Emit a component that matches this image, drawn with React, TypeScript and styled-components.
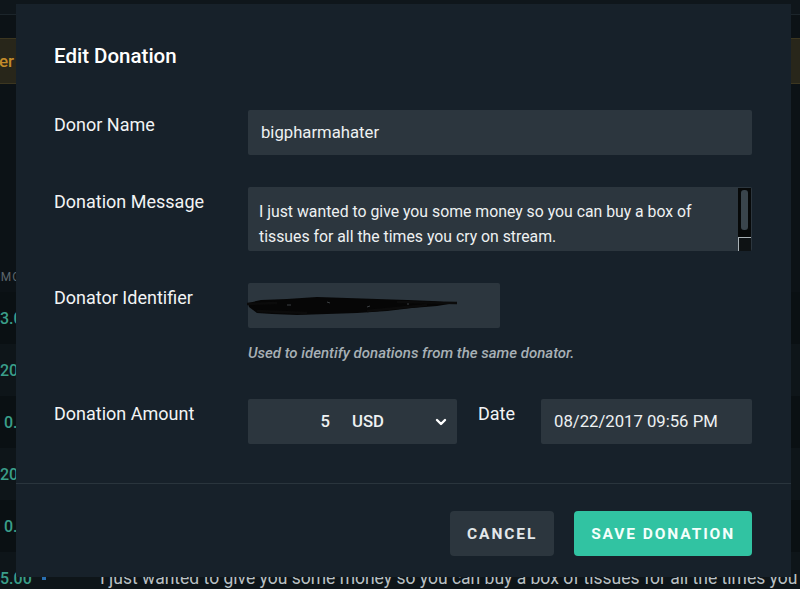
import React from "react";
import styled, { createGlobalStyle } from "styled-components";

const GlobalStyle = createGlobalStyle`
  html, body {
    margin: 0;
    padding: 0;
    background: #0c1216;
    font-family: Roboto, "Liberation Sans", sans-serif;
  }
  * {
    box-sizing: border-box;
  }
`;

// background page (dimmed, behind the modal)
const Page = styled.div`
  position: relative;
  width: 800px;
  height: 589px;
  overflow: hidden;
  background: #0c1216;
`;

const TopBar = styled.div`
  height: 15px;
  background: #0f161b;
  border-bottom: 1px solid #1c252b;
`;

const Banner = styled.div`
  margin-top: 23px;
  height: 46px;
  background: #28261a;
  border-top: 1px solid #3c3620;
  border-bottom: 1px solid #3c3620;
  display: flex;
  align-items: center;
  color: #c38b2a;
  font-size: 17px;
  font-weight: 500;
  white-space: nowrap;
  text-indent: -56px;
`;

const TableHead = styled.div`
  margin-top: 186px;
  height: 22px;
  color: #5d666c;
  font-size: 12px;
  letter-spacing: 1px;
  text-indent: -8px;
  white-space: nowrap;
`;

const Row = styled.div<{ $odd: boolean }>`
  height: 52px;
  display: flex;
  align-items: center;
  background: ${(p) => (p.$odd ? "#0a1013" : "#0e1519")};
  white-space: nowrap;
  font-size: 16px;
`;

const Amount = styled.span<{ $indent: number }>`
  width: 100px;
  flex: none;
  color: #3a9e89;
  font-weight: 500;
  padding-left: ${(p) => p.$indent}px;
  display: flex;
  align-items: center;
  gap: 6px;
`;

const Dot = styled.span`
  width: 4px;
  height: 4px;
  margin-left: 4px;
  background: #2a6fb0;
  display: inline-block;
`;

const RowText = styled.span`
  color: #b9c0c4;
  font-size: 17.5px;
`;

// modal
const Modal = styled.div`
  position: absolute;
  left: 16px;
  top: 4px;
  width: 775px;
  height: 573px;
  background: #17212a;
  display: flex;
  flex-direction: column;
`;

const Body = styled.div`
  padding: 41px 39px 0 38px;
  flex: 1;
`;

const Title = styled.h2`
  margin: 0 0 43px;
  font-size: 20.5px;
  line-height: 22px;
  font-weight: 500;
  color: #ffffff;
`;

const FormRow = styled.div<{ $gap: number }>`
  display: grid;
  grid-template-columns: 194px 1fr;
  margin-bottom: ${(p) => p.$gap}px;
`;

const Label = styled.label`
  padding-top: 5px;
  font-size: 18px;
  line-height: 20px;
  font-weight: 400;
  color: #f2f4f5;
`;

const Field = styled.div<{ $width?: number }>`
  height: 45px;
  width: ${(p) => (p.$width ? `${p.$width}px` : "100%")};
  background: #2c363e;
  border-radius: 2px;
  display: flex;
  align-items: center;
  padding: 0 13px;
  font-size: 16.7px;
  color: #eef1f2;
`;

const TextArea = styled.div`
  position: relative;
  height: 64px;
  background: #2c363e;
  border-radius: 2px;
  padding: 12px 30px 0 11px;
  font-size: 15.8px;
  line-height: 25px;
  color: #eef1f2;
`;

const ScrollTrack = styled.div`
  position: absolute;
  right: 1px;
  top: 1px;
  bottom: 14px;
  width: 13px;
  background: #070909;
  padding: 2px 3px;
`;

const ScrollThumb = styled.div`
  height: 40px;
  border-radius: 3px;
  background: #3a454c;
`;

const Resizer = styled.div`
  position: absolute;
  right: 1px;
  bottom: 0;
  width: 13px;
  height: 14px;
  background: #0e1214;
  border-left: 1px solid #aab2b6;
  border-top: 1px solid #aab2b6;
`;

const Scribble = styled.svg`
  margin-left: -14px;
`;

const Help = styled.div`
  grid-column: 2;
  margin-top: 16px;
  font-size: 15px;
  font-weight: 500;
  font-style: italic;
  color: #a7b0b5;
`;

const Inline = styled.div`
  display: flex;
  align-items: flex-start;
`;

const AmountBox = styled(Field)`
  padding: 0 10px 0 0;
`;

const AmountValue = styled.span`
  width: 82px;
  text-align: right;
  font-weight: 500;
`;

const Currency = styled.span`
  margin-left: 22px;
  flex: 1;
  font-weight: 500;
`;

const DateLabel = styled(Label)`
  margin: 0 21px;
  width: 42px;
  white-space: nowrap;
`;

const Footer = styled.div`
  border-top: 1px solid #2a353d;
  padding: 27px 39px 21px;
  display: flex;
  justify-content: flex-end;
  gap: 20px;
`;

const Button = styled.button<{ $primary?: boolean }>`
  height: 45px;
  border: none;
  border-radius: 4px;
  padding: 0 17px;
  font-family: Roboto, "Liberation Sans", sans-serif;
  font-size: 15.5px;
  font-weight: 700;
  letter-spacing: 1.9px;
  color: ${(p) => (p.$primary ? "#f4fffc" : "#e3e7ea")};
  background: ${(p) => (p.$primary ? "#31c3a2" : "#2c363e")};
  cursor: pointer;
`;

const message =
  "I just wanted to give you some money so you can buy a box of tissues for all the times you cry on stream.";

const rows = [
  { amount: "3.00", indent: 0, text: "" },
  { amount: "200.00", indent: 0, text: "" },
  { amount: "0.50", indent: 4, text: "Love the streams, keep it up! Here is a little something to help out with the new mic fo" },
  { amount: "20.00", indent: 0, text: "" },
  { amount: "0.50", indent: 4, text: "" },
  { amount: "5.00", indent: 0, text: message },
];

export default function App() {
  return (
    <Page>
      <GlobalStyle />
      <TopBar />
      <Banner>Streamer</Banner>
      <TableHead>AMOUNT</TableHead>
      {rows.map((r, i) => (
        <Row key={i} $odd={i % 2 === 0}>
          <Amount $indent={r.indent}>
            {r.amount}
            {i === 5 && <Dot />}
          </Amount>
          <RowText>{r.text}</RowText>
        </Row>
      ))}

      <Modal>
        <Body>
          <Title>Edit Donation</Title>

          <FormRow $gap={32}>
            <Label>Donor Name</Label>
            <Field>bigpharmahater</Field>
          </FormRow>

          <FormRow $gap={32}>
            <Label>Donation Message</Label>
            <TextArea>
              {message}
              <ScrollTrack>
                <ScrollThumb />
              </ScrollTrack>
              <Resizer />
            </TextArea>
          </FormRow>

          <FormRow $gap={37}>
            <Label>Donator Identifier</Label>
            <Field $width={252}>
              <Scribble width="212" height="30" viewBox="0 0 212 30">
                <path
                  d="M1 12 L 14 9 L 40 8 L 70 6 L 100 7 L 130 8 L 160 9 L 185 10 L 208 12 L 190 15 L 165 17 L 140 20 L 110 22 L 80 23 L 50 24 L 25 23 L 10 22 L 6 19 L 2 16 Z"
                  fill="#060606"
                />
                <path
                  d="M0 13 L 30 12 M10 20 L 60 22 M120 20 L 180 14 M150 11 L 210 12"
                  stroke="#0b0b0b"
                  strokeWidth="2.5"
                  fill="none"
                />
                <path d="M40 14 L 44 14 M80 11 L 83 12 M120 16 L 123 15 M160 13 L 162 13" stroke="#3b3f42" strokeWidth="1" />
              </Scribble>
            </Field>
            <Help>Used to identify donations from the same donator.</Help>
          </FormRow>

          <FormRow $gap={0}>
            <Label>Donation Amount</Label>
            <Inline>
              <AmountBox $width={209}>
                <AmountValue>5</AmountValue>
                <Currency>USD</Currency>
                <svg width="12" height="12" viewBox="0 0 12 12">
                  <path
                    d="M2 4 L6 8 L10 4"
                    stroke="#ffffff"
                    strokeWidth="2.4"
                    fill="none"
                    strokeLinecap="round"
                    strokeLinejoin="round"
                  />
                </svg>
              </AmountBox>
              <DateLabel>Date</DateLabel>
              <Field $width={211}>08/22/2017 09:56 PM</Field>
            </Inline>
          </FormRow>
        </Body>

        <Footer>
          <Button>CANCEL</Button>
          <Button $primary>SAVE DONATION</Button>
        </Footer>
      </Modal>
    </Page>
  );
}
